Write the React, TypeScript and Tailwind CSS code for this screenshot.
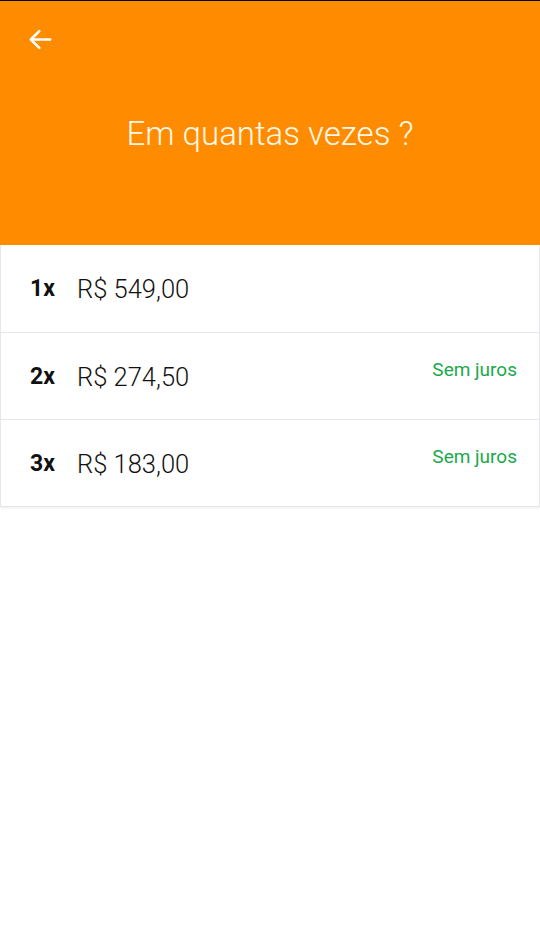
const rows = [
  { n: "1x", price: "R$ 549,00", note: "" },
  { n: "2x", price: "R$ 274,50", note: "Sem juros" },
  { n: "3x", price: "R$ 183,00", note: "Sem juros" },
];

export default function App() {
  return (
    <div className="min-h-[947px] bg-white font-['Roboto',sans-serif]">
      <header className="h-[245px] border-t border-black bg-[#ff8c00] flex flex-col">
        <button className="w-[81px] h-[76px] flex items-center justify-center text-white">
          <svg width="29" height="29" viewBox="0 0 24 24" fill="none" stroke="currentColor" strokeWidth="2.1" strokeLinecap="round" strokeLinejoin="round">
            <path d="M20 12H5" />
            <path d="M11 5l-7 7 7 7" />
          </svg>
        </button>
        <h1 className="mt-[32px] text-center text-[33px] font-light text-[#fff8e6]">
          Em quantas vezes ?
        </h1>
      </header>
      <ul className="border-x border-b border-gray-200 shadow-[0_1px_2px_rgba(0,0,0,0.08)]">
        {rows.map((row, i) => (
          <li
            key={row.n}
            className={
              "h-[87px] flex items-center pl-[29px] pr-[22px] pt-[2px] " +
              (i > 0 ? "border-t border-gray-200" : "")
            }
          >
            <span className="w-[47px] text-[23px] font-bold text-[#111]">{row.n}</span>
            <span className="flex-1 text-[25.5px] font-light text-[#111]">{row.price}</span>
            {row.note && (
              <span className="self-start mt-[21px] text-[19px] text-[#19a94b]">{row.note}</span>
            )}
          </li>
        ))}
      </ul>
    </div>
  );
}
